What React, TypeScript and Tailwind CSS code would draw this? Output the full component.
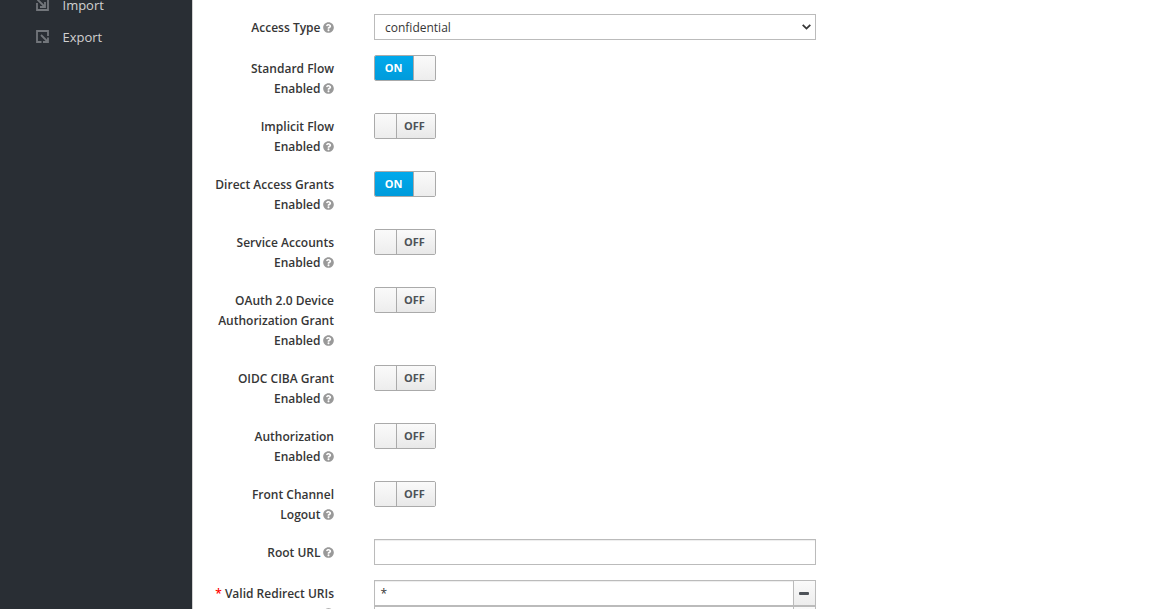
import { FaQuestionCircle } from "react-icons/fa";
import type { ReactNode } from "react";

const toggles: { lines: string[]; on: boolean }[] = [
  { lines: ["Standard Flow", "Enabled"], on: true },
  { lines: ["Implicit Flow", "Enabled"], on: false },
  { lines: ["Direct Access Grants", "Enabled"], on: true },
  { lines: ["Service Accounts", "Enabled"], on: false },
  { lines: ["OAuth 2.0 Device", "Authorization Grant", "Enabled"], on: false },
  { lines: ["OIDC CIBA Grant", "Enabled"], on: false },
  { lines: ["Authorization", "Enabled"], on: false },
  { lines: ["Front Channel", "Logout"], on: false },
];

function ImportIcon() {
  return (
    <svg viewBox="0 0 13 13" className="mb-[3px] size-[13px]" fill="none" stroke="#72767b" strokeWidth="1.8">
      <path d="M1 5v7h11V1H5" />
      <path d="M1.5 1.5L8.5 8.5M9 4v5H4" />
    </svg>
  );
}

function ExportIcon() {
  return (
    <svg viewBox="0 0 13 13" className="mb-[3px] size-[13px]" fill="none" stroke="#72767b" strokeWidth="1.8">
      <path d="M12 6V1H1v11h4.5" />
      <path d="M5 5L11.5 11.5M12 7.5V12H7" />
    </svg>
  );
}

function Label({ lines, required }: { lines: string[]; required?: boolean }) {
  return (
    <div className="-mb-px w-[142px] shrink-0 pt-1 text-right text-[12px] leading-5 font-semibold whitespace-nowrap text-[#363636]">
      {lines.map((line, i) => (
        <div key={line} className="h-5">
          {required && i === 0 && <span className="text-[#f00]">* </span>}
          {line}
          {i === lines.length - 1 && (
            <FaQuestionCircle className="ml-[2.5px] inline size-[11px] align-[-1px] text-[#999]" />
          )}
        </div>
      ))}
    </div>
  );
}

function Row({ lines, required, children }: { lines: string[]; required?: boolean; children: ReactNode }) {
  return (
    <div className="flex items-start gap-10">
      <Label lines={lines} required={required} />
      {children}
    </div>
  );
}

function Toggle({ on }: { on: boolean }) {
  return (
    <div className="flex h-[26px] w-[62px] overflow-hidden rounded-[2px] border border-[#aaa] text-[11px] leading-6 font-bold">
      {on ? (
        <>
          <span className="w-[39px] border-r border-[#aaa] bg-linear-to-b from-[#00a9ec] to-[#009bdb] pr-px text-center text-white">ON</span>
          <span className="flex-1 bg-linear-to-b from-[#fafafa] to-[#ededed]" />
        </>
      ) : (
        <>
          <span className="w-[22px] border-r border-[#aaa] bg-linear-to-b from-[#fafafa] to-[#ededed]" />
          <span className="flex-1 bg-linear-to-b from-[#fafafa] to-[#e8e8e8] pr-[3px] text-center text-[#4d5258]">OFF</span>
        </>
      )}
    </div>
  );
}

function RemoveButton() {
  return (
    <div className="flex w-[22px] items-center border-l border-[#bbb] bg-linear-to-b from-[#fafafa] to-[#ededed] pl-[5px]">
      <span className="h-[3px] w-[10px] rounded-[1px] bg-[#4d5258]" />
    </div>
  );
}

export default function App() {
  return (
    <div className="flex h-[609px] w-[1158px] overflow-hidden bg-white font-['Open_Sans',sans-serif]">
      <aside className="w-48 shrink-0 bg-[#292e34] text-[13px] text-[#d1d1d1]">
        <div className="-mt-[10px] flex h-8 items-center gap-[13.5px] pl-9">
          <ImportIcon />
          Import
        </div>
        <div className="flex h-8 items-center gap-[13.5px] pl-9">
          <ExportIcon />
          Export
        </div>
      </aside>
      <main className="flex flex-col gap-[15px] border-l border-[#d1d1d1] pt-[14px] text-[12px] text-[#363636] *:-ml-px">
        <Row lines={["Access Type"]}>
          <div className="flex h-[26px] w-[442px] items-center justify-between border border-[#bbb] pr-[4.5px] pl-[10px] leading-6">
            <span className="pt-px">confidential</span>
            <svg viewBox="0 0 9 6" className="h-[6px] w-[9px]" fill="none" stroke="#363636" strokeWidth="1.8">
              <path d="M0.7 0.8L4.5 4.6L8.3 0.8" />
            </svg>
          </div>
        </Row>
        {toggles.map((t) => (
          <Row key={t.lines[0]} lines={t.lines}>
            <Toggle on={t.on} />
          </Row>
        ))}
        <Row lines={["Root URL"]}>
          <div className="h-[26px] w-[442px] border border-[#bbb] shadow-[inset_0_1px_1px_rgba(0,0,0,0.075)]" />
        </Row>
        <Row lines={["Valid Redirect URIs", ""]} required>
          <div className="flex w-[442px] flex-col">
            <div className="flex h-[26px] border border-[#bbb]">
              <span className="flex-1 pt-px pl-[5.5px] leading-6 shadow-[inset_0_1px_1px_rgba(0,0,0,0.075)]">*</span>
              <RemoveButton />
            </div>
            <div className="-mt-px flex h-[26px] border border-t-2 border-[#bbb]">
              <span className="flex-1" />
              <RemoveButton />
            </div>
          </div>
        </Row>
      </main>
    </div>
  );
}
